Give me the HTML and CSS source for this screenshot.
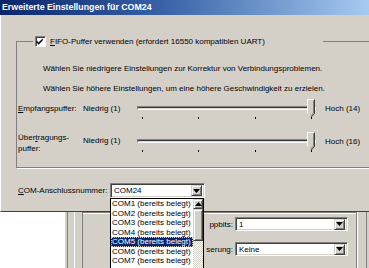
FILE: index.html
```html
<!DOCTYPE html>
<html lang="de">
<head>
<meta charset="utf-8">
<link rel="stylesheet" href="styles.css">
</head>
<body>
<div class="screen">
  <div class="dialog">
    <div class="titlebar">Erweiterte Einstellungen für COM24</div>
    <div class="dlg-body">
      <fieldset class="group">
        <legend class="group-legend">
          <span class="check"><svg width="11" height="11" viewBox="0 0 11 11"><path d="M2 4.5 L4 6.5 L8.5 2 L8.5 4.5 L4 9 L2 7 Z" fill="#000"/></svg></span>
          <span class="legend-text"><u>F</u>IFO-Puffer verwenden (erfordert 16550 kompatiblen UART)</span>
        </legend>
        <p class="hint first">Wählen Sie niedrigere Einstellungen zur Korrektur von Verbindungsproblemen.</p>
        <p class="hint">Wählen Sie höhere Einstellungen, um eine höhere Geschwindigkeit zu erzielen.</p>
        <div class="slider-row">
          <div class="sl-label single"><u>E</u>mpfangspuffer:</div>
          <div class="sl-min">Niedrig (1)</div>
          <div class="slider">
            <div class="track"></div>
            <svg class="thumb" width="8" height="19" viewBox="0 0 8 19"><path d="M0.5 0.5 H7.5 V14.5 L4 18.5 L0.5 14.5 Z" fill="#d4d0c8"/><path d="M0.5 14.5 V0.5 H7" fill="none" stroke="#fff"/><path d="M7.5 0.5 V14.5 L4 18.3" fill="none" stroke="#404040"/><path d="M6.5 1.5 V14 L4 17" fill="none" stroke="#808080"/></svg>
            <div class="ticks"><i></i><i></i><i></i><i></i></div>
          </div>
          <div class="sl-max">Hoch (14)</div>
        </div>
        <div class="slider-row second">
          <div class="sl-label">Über<u>t</u>ragungs-<br>puffer:</div>
          <div class="sl-min">Niedrig (1)</div>
          <div class="slider">
            <div class="track"></div>
            <svg class="thumb" width="8" height="19" viewBox="0 0 8 19"><path d="M0.5 0.5 H7.5 V14.5 L4 18.5 L0.5 14.5 Z" fill="#d4d0c8"/><path d="M0.5 14.5 V0.5 H7" fill="none" stroke="#fff"/><path d="M7.5 0.5 V14.5 L4 18.3" fill="none" stroke="#404040"/><path d="M6.5 1.5 V14 L4 17" fill="none" stroke="#808080"/></svg>
            <div class="ticks"><i></i><i></i><i></i><i></i></div>
          </div>
          <div class="sl-max">Hoch (16)</div>
        </div>
      </fieldset>
      <div class="port-row">
        <div class="port-label"><u>C</u>OM-Anschlussnummer:</div>
        <div class="combo">
          <span class="combo-text">COM24</span>
          <span class="combo-btn"><svg width="7" height="4" viewBox="0 0 7 4"><path d="M0 0 H7 L3.5 4 Z" fill="#000"/></svg></span>
        </div>
      </div>
    </div>
  </div>

  <div class="under">
    <div class="under-blank"></div>
    <div class="under-win">
      <div class="under-strip"></div>
      <div class="under-panel">
        <div class="under-row">
          <span class="under-label">ppbits:</span>
          <div class="combo wide"><span class="combo-text">1</span><span class="combo-btn"><svg width="7" height="4" viewBox="0 0 7 4"><path d="M0 0 H7 L3.5 4 Z" fill="#000"/></svg></span></div>
        </div>
        <div class="under-row">
          <span class="under-label">serung:</span>
          <div class="combo wide"><span class="combo-text">Keine</span><span class="combo-btn"><svg width="7" height="4" viewBox="0 0 7 4"><path d="M0 0 H7 L3.5 4 Z" fill="#000"/></svg></span></div>
        </div>
      </div>
      <div class="under-edge"></div>
    </div>
  </div>

  <div class="droplist">
    <div class="items">
      <div class="item">COM1 (bereits belegt)</div>
      <div class="item">COM2 (bereits belegt)</div>
      <div class="item">COM3 (bereits belegt)</div>
      <div class="item">COM4 (bereits belegt)</div>
      <div class="item sel"><span>COM5 (bereits belegt)</span></div>
      <div class="item">COM6 (bereits belegt)</div>
      <div class="item">COM7 (bereits belegt)</div>
    </div>
    <div class="vscroll">
      <div class="sb-btn"><svg width="7" height="4" viewBox="0 0 7 4"><path d="M0 4 H7 L3.5 0 Z" fill="#000"/></svg></div>
      <div class="sb-thumb"></div>
      <div class="sb-track"></div>
    </div>
  </div>
</div>
</body>
</html>
```

FILE: styles.css
```css
* { box-sizing: border-box; }
html, body { margin: 0; padding: 0; }
body {
  width: 369px;
  height: 268px;
  overflow: hidden;
  background: #fff;
  font-family: "Liberation Sans", Arial, sans-serif;
  font-size: 8px;
  color: #000;
}
u { text-decoration: underline; text-underline-offset: 1px; }

.screen {
  position: relative;
  width: 369px;
  height: 268px;
  overflow: hidden;
}

.dialog {
  height: 212px;
  background: #d4d0c8;
  border-bottom: 1px solid #404040;
  border-left: 1px solid #fff;
  display: flex;
  flex-direction: column;
}

.titlebar {
  height: 15px;
  flex: none;
  margin-left: -1px;
  background: linear-gradient(90deg, #0a246a 0%, #3a64a8 45%, #a6caf0 100%);
  color: #fff;
  font-weight: bold;
  font-size: 8.8px;
  line-height: 15px;
  padding-left: 2px;
}

.dlg-body {
  flex: 1;
  padding-left: 15px;
}

.group {
  margin: 21px -40px 0 0;
  padding: 0 0 9px 0;
  border: 1px solid #808080;
  border-right: none;
  box-shadow: 1px 1px 0 #fff;
  min-width: 0;
}

.group-legend {
  margin-left: 16px;
  padding: 0 2px;
  width: 290px;
  height: 11px;
  display: flex;
  align-items: center;
  gap: 4px;
}

.check {
  width: 11px;
  height: 11px;
  flex: none;
  background: #fff;
  border: 1px solid;
  border-color: #808080 #fff #fff #808080;
  box-shadow: inset 1px 1px 0 #404040;
  display: flex;
}
.check svg { margin: -1px 0 0 -1px; }

.legend-text { line-height: 11px; white-space: nowrap; }

.hint {
  margin: 9px 0 0 26px;
  line-height: 11px;
  white-space: nowrap;
}
.hint.first { margin-top: 16px; }

.slider-row {
  margin-top: 5px;
  height: 26px;
  display: flex;
  align-items: flex-start;
}
.slider-row.second { margin-top: 7px; }

.sl-label {
  width: 66px;
  padding-left: 1px;
  line-height: 11px;
}
.sl-label.single { margin-top: 3.5px; }

.sl-min {
  width: 54px;
  margin-top: 3.5px;
  line-height: 11px;
}
.slider-row.second .sl-min { margin-top: 3px; }

.slider {
  position: relative;
  width: 179px;
  height: 26px;
}
.track {
  margin-top: 7px;
  height: 4px;
  border: 1px solid;
  border-color: #808080 #fff #fff #808080;
  box-shadow: inset 0 1px 0 #404040;
}
.thumb {
  position: absolute;
  left: 170px;
  top: 0;
}
.ticks {
  margin: 7px 4px 0 5px;
  display: flex;
  justify-content: space-between;
}
.ticks i {
  display: block;
  width: 1px;
  height: 2px;
  background: #000;
}

.sl-max {
  margin: 3.5px 0 0 9px;
  line-height: 11px;
  white-space: nowrap;
}

.port-row {
  margin-top: 15px;
  display: flex;
  align-items: center;
}
.port-label {
  width: 94px;
  padding-left: 2px;
  line-height: 11px;
}

.combo {
  width: 95px;
  height: 15px;
  background: #fff;
  border: 1px solid;
  border-color: #808080 #fff #fff #808080;
  box-shadow: inset 1px 1px 0 #404040, inset -1px -1px 0 #d4d0c8;
  display: flex;
  align-items: center;
  padding: 2px;
}
.combo-text {
  flex: 1;
  padding-left: 1px;
  line-height: 11px;
}
.combo-btn {
  width: 11px;
  height: 11px;
  background: #d4d0c8;
  border: 1px solid;
  border-color: #d4d0c8 #404040 #404040 #d4d0c8;
  box-shadow: inset 1px 1px 0 #fff, inset -1px -1px 0 #808080;
  display: flex;
  align-items: center;
  justify-content: center;
}

/* window underneath */
.under {
  display: flex;
  height: 56px;
}
.under-blank { width: 65px; background: #fff; }
.under-win {
  flex: 1;
  display: flex;
  background: #d4d0c8;
}
.under-strip {
  width: 18px;
  border-left: 2px solid #d4d0c8;
  box-shadow: inset 1px 0 0 #808080, inset 7px 0 0 #d4d0c8, inset 8px 0 0 #fff;
  background: #d4d0c8;
}
.under-strip::after {
  content: "";
  display: block;
  width: 1px;
  height: 100%;
  margin-left: 15px;
  background: #808080;
}
.under-panel {
  width: 274px;
  border-top: 1px solid #808080;
  border-right: 1px solid #808080;
  box-shadow: inset 0 1px 0 #fff;
  padding: 4px 0 0 0;
  display: flex;
  flex-direction: column;
  gap: 11px;
}
.under-row {
  display: flex;
  align-items: center;
}
.under-label {
  margin-left: 123px;
  width: 29px;
  text-align: right;
  white-space: nowrap;
  padding-right: 2px;
  line-height: 11px;
}
.combo.wide { width: 113px; height: 14px; }
.under-edge {
  flex: 1;
  border-left: 1px solid #fff;
  box-shadow: inset -2px 0 0 #d4d0c8, inset -3px 0 0 #808080;
}

/* open dropdown list */
.droplist {
  position: absolute;
  left: 110px;
  top: 198px;
  width: 94px;
  height: 80px;
  background: #fff;
  border: 1px solid #000;
  display: flex;
}
.items { flex: 1; }
.item {
  height: 9.5px;
  line-height: 9.5px;
  padding-left: 1px;
  white-space: nowrap;
}
.item.sel span {
  display: inline-block;
  background: #0a246a;
  color: #fff;
  outline: 1px dotted #d4d0c8;
  outline-offset: -1px;
  margin-left: -1px;
  padding-left: 1px;
  width: 82px;
}
.vscroll {
  width: 10px;
  display: flex;
  flex-direction: column;
}
.sb-btn, .sb-thumb {
  background: #d4d0c8;
  border: 1px solid;
  border-color: #d4d0c8 #404040 #404040 #d4d0c8;
  box-shadow: inset 1px 1px 0 #fff, inset -1px -1px 0 #808080;
}
.sb-btn {
  height: 10px;
  display: flex;
  align-items: center;
  justify-content: center;
}
.sb-thumb { height: 32px; }
.sb-track {
  flex: 1;
  background: repeating-conic-gradient(#fff 0 25%, #d4d0c8 0 50%) 0 0 / 2px 2px;
}
```
